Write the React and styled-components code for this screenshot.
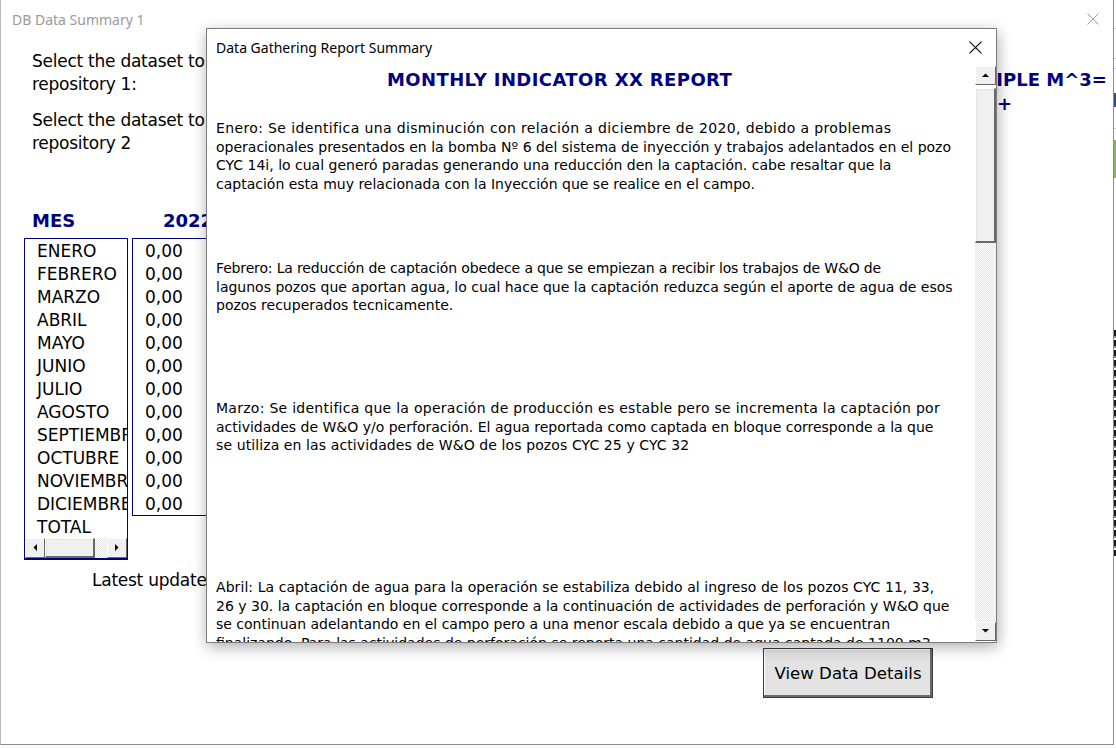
import React from "react";
import styled, { createGlobalStyle } from "styled-components";

const GlobalStyle = createGlobalStyle`
  html, body {
    margin: 0;
    padding: 0;
    width: 1116px;
    height: 748px;
    overflow: hidden;
    background: #ffffff;
  }
  * { box-sizing: border-box; }
`;

const NAVY = "#000080";
const FORM_FONT = `"DejaVu Sans", "Liberation Sans", sans-serif`;
const UI_FONT = `"Noto Sans", "Open Sans", sans-serif`;

const Desktop = styled.div`
  width: 1116px;
  height: 748px;
  display: flex;
  background: #ffffff;
`;

const Window = styled.div`
  position: relative;
  width: 1114px;
  height: 745px;
  flex: none;
  display: flex;
  flex-direction: column;
  background: #ffffff;
  border-left: 1px solid #b9b9b9;
  border-right: 1px solid #8d8d8d;
  border-bottom: 1px solid #8d8d8d;
`;

const EdgeStrip = styled.div`
  flex: 1;
  height: 748px;
  display: flex;
  flex-direction: column;
  background:
    linear-gradient(#ffffff 0 28px, #c8c8c8 28px 29px, #ffffff 29px 58px, #c8c8c8 58px 59px,
      #ffffff 59px 68px, #c8c8c8 68px 69px, #ffffff 69px 93px, #2f4f86 93px 107px,
      #ffffff 107px 128px, #c8c8c8 128px 129px, #ffffff 129px 140px, #8cb369 140px 178px,
      #ffffff 178px);
`;

const EdgeText = styled.div`
  margin-top: 330px;
  height: 226px;
  background: repeating-linear-gradient(#1a1a1a 0 6px, #8a8a8a 6px 8px, #ffffff 8px 10px);
`;

const TitleBar = styled.div`
  height: 38px;
  flex: none;
  display: flex;
  align-items: center;
  justify-content: space-between;
  padding: 0 14px 0 11px;
`;

const WindowTitle = styled.span`
  font-family: ${UI_FONT};
  font-size: 14px;
  color: #9a9a9a;
`;

const CloseGlyph = ({ color, size }) => (
  <svg width={size} height={size} viewBox="0 0 12 12">
    <path d="M0.5 0.5 L11.5 11.5 M11.5 0.5 L0.5 11.5" stroke={color} strokeWidth="1" fill="none" />
  </svg>
);

const Body = styled.div`
  flex: 1;
  display: grid;
  grid-template-columns: 996px 1fr;
`;

const LeftColumn = styled.div`
  display: flex;
  flex-direction: column;
  padding-left: 23px;
`;

const Prompt = styled.div`
  margin: ${(p) => p.$top}px 0 0 8px;
  font-family: ${FORM_FONT};
  font-size: 17px;
  letter-spacing: -0.25px;
  line-height: 22.5px;
  color: #000;
  white-space: nowrap;
`;

const HeaderRow = styled.div`
  display: flex;
  margin: 56px 0 0 8px;
  height: 22px;
`;

const HeaderCell = styled.div`
  width: ${(p) => p.$w}px;
  font-family: ${FORM_FONT};
  font-weight: bold;
  font-size: 18px;
  line-height: 22px;
  color: ${NAVY};
`;

const ListsRow = styled.div`
  display: flex;
  align-items: flex-start;
  gap: 4px;
  margin-top: 6px;
  height: 322px;
`;

const ListBox = styled.div`
  width: ${(p) => p.$w}px;
  height: ${(p) => p.$h}px;
  display: flex;
  flex-direction: column;
  border: 1px solid ${NAVY};
  border-bottom-width: ${(p) => (p.$thick ? 2 : 1)}px;
  overflow: hidden;
  background: #fff;
`;

const ListItems = styled.div`
  flex: 1;
  padding: 1px 0 0 12px;
  overflow: hidden;
`;

const ListItem = styled.div`
  height: 23px;
  font-family: ${FORM_FONT};
  font-size: 17px;
  line-height: 23px;
  color: #000;
  white-space: nowrap;
`;

const HScroll = styled.div`
  height: 20px;
  display: flex;
  flex: none;
`;

const ScrollButton = styled.div`
  width: ${(p) => p.$w || 20}px;
  height: ${(p) => p.$h || 20}px;
  flex: none;
  display: flex;
  align-items: center;
  justify-content: center;
  background: #f0f0f0;
  border-top: 1px solid #ffffff;
  border-left: 1px solid #ffffff;
  border-right: 1px solid #696969;
  border-bottom: 1px solid #696969;
`;

const ScrollThumb = styled.div`
  flex: none;
  width: ${(p) => p.$w || "auto"};
  height: ${(p) => p.$h || "auto"};
  margin: ${(p) => p.$m || 0};
  background: #f0f0f0;
  border-top: 1px solid #ffffff;
  border-left: 1px solid #ffffff;
  border-right: 2px solid #696969;
  border-bottom: 2px solid #696969;
  box-shadow: inset 1px 1px 0 #e3e3e3;
`;

const ScrollTrack = styled.div`
  flex: 1;
  background-color: #ffffff;
  background-image: repeating-conic-gradient(#e4e4e4 0 25%, #ffffff 0 50%);
  background-size: 2px 2px;
`;

const Arrow = ({ dir }) => {
  const pts = {
    up: "0,4 7,4 3.5,0.5",
    down: "0,0 7,0 3.5,3.5",
    left: "4,0 4,7 0.5,3.5",
    right: "0,0 0,7 3.5,3.5",
  }[dir];
  const horiz = dir === "left" || dir === "right";
  return (
    <svg width={horiz ? 5 : 8} height={horiz ? 8 : 5} viewBox={horiz ? "0 0 5 8" : "0 0 8 5"}>
      <polygon points={pts} fill="#000" />
    </svg>
  );
};

const LatestUpdate = styled.div`
  margin: 9px 0 0 68px;
  font-family: ${FORM_FONT};
  font-size: 17px;
  letter-spacing: -0.25px;
  line-height: 22px;
  color: #000;
  white-space: nowrap;
`;

const ButtonRow = styled.div`
  display: flex;
  justify-content: flex-end;
  margin: 57px 64px 0 0;
`;

const ActionButton = styled.button`
  width: 170px;
  height: 50px;
  padding: 0;
  background: #e3e3e3;
  border: 1px solid #3a3a3a;
  box-shadow: inset -2px -2px 0 #6a6a6a, inset 1px 1px 0 #ffffff;
  font-family: ${FORM_FONT};
  font-size: 16.6px;
  color: #000;
  cursor: default;
`;

const RightColumn = styled.div`
  padding-top: 30px;
`;

const SideLabel = styled.div`
  width: 115px;
  text-indent: -54px;
  font-family: ${FORM_FONT};
  font-weight: bold;
  font-size: 18px;
  line-height: 24px;
  color: ${NAVY};
`;

/* ---------- modal dialog ---------- */

const Dialog = styled.div`
  position: absolute;
  left: 205px;
  top: 28px;
  width: 791px;
  height: 615px;
  z-index: 10;
  display: flex;
  flex-direction: column;
  background: #ffffff;
  border: 1px solid #7c7c7c;
  box-shadow: 1px 4px 14px rgba(0, 0, 0, 0.32);
`;

const DialogTitleBar = styled.div`
  height: 33px;
  flex: none;
  display: flex;
  align-items: center;
  justify-content: space-between;
  padding: 3px 14px 0 9px;
`;

const DialogTitle = styled.span`
  font-family: ${UI_FONT};
  font-size: 14px;
  color: #000;
`;

const DialogBody = styled.div`
  flex: 1;
  display: flex;
  overflow: hidden;
`;

const TextPane = styled.div`
  flex: 1;
  overflow: hidden;
  padding: 6px 0 0 9px;
`;

const ReportHeading = styled.div`
  padding-left: 171px;
  font-family: ${FORM_FONT};
  font-weight: bold;
  font-size: 18px;
  letter-spacing: 0.4px;
  line-height: 24px;
  color: ${NAVY};
  white-space: nowrap;
`;

const Paragraph = styled.div`
  margin-top: ${(p) => p.$top}px;
  font-family: ${FORM_FONT};
  font-size: 14px;
  line-height: 18.7px;
  color: #000;
`;

const Line = styled.div`
  white-space: nowrap;
  letter-spacing: ${(p) => p.$ls || 0}px;
`;

const VScroll = styled.div`
  width: 21px;
  flex: none;
  display: flex;
  flex-direction: column;
  margin: 4px 0 1px 0;
`;

const months = [
  "ENERO", "FEBRERO", "MARZO", "ABRIL", "MAYO", "JUNIO", "JULIO",
  "AGOSTO", "SEPTIEMBRE", "OCTUBRE", "NOVIEMBRE", "DICIEMBRE", "TOTAL",
];

const paragraphs = [
  {
    top: 27,
    lines: [
      ["Enero: Se identifica una disminución con relación a diciembre de 2020, debido a problemas", 0.37],
      ["operacionales presentados en la bomba Nº 6 del sistema de inyección y trabajos adelantados en el pozo", 0],
      ["CYC 14i, lo cual generó paradas generando una reducción den la captación. cabe resaltar que la", 0],
      ["captación esta muy relacionada con la Inyección que se realice en el campo.", 0],
    ],
  },
  {
    top: 65,
    lines: [
      ["Febrero: La reducción de captación obedece a que se empiezan a recibir los trabajos de W&O de", -0.15],
      ["lagunos pozos que aportan agua, lo cual hace que la captación reduzca según el aporte de agua de esos", 0],
      ["pozos recuperados tecnicamente.", 0],
    ],
  },
  {
    top: 84,
    lines: [
      ["Marzo: Se identifica que la operación de producción es estable pero se incrementa la captación por", 0.27],
      ["actividades de W&O y/o perforación. El agua reportada como captada en bloque corresponde a la que", 0],
      ["se utiliza en las actividades de W&O de los pozos CYC 25 y CYC 32", 0.1],
    ],
  },
  {
    top: 123,
    lines: [
      ["Abril: La captación de agua para la operación se estabiliza debido al ingreso de los pozos CYC 11, 33,", 0.07],
      ["26 y 30. la captación en bloque corresponde a la continuación de actividades de perforación y W&O que", 0],
      ["se continuan adelantando en el campo pero a una menor escala debido a que ya se encuentran", 0],
      ["finalizando. Para las actividades de perforación se reporta una cantidad de agua captada de 1100 m3", 0],
    ],
  },
];

export default function App() {
  return (
    <>
      <GlobalStyle />
      <Desktop>
        <Window>
          <TitleBar>
            <WindowTitle>DB Data Summary 1</WindowTitle>
            <CloseGlyph color="#9a9a9a" size={12} />
          </TitleBar>
          <Body>
            <LeftColumn>
              <Prompt $top={12}>
                Select the dataset to load into
                <br />
                repository 1:
              </Prompt>
              <Prompt $top={14}>
                Select the dataset to load into
                <br />
                repository 2
              </Prompt>
              <HeaderRow>
                <HeaderCell $w={131}>MES</HeaderCell>
                <HeaderCell $w={80}>2022</HeaderCell>
              </HeaderRow>
              <ListsRow>
                <ListBox $w={104} $h={322} $thick>
                  <ListItems>
                    {months.map((m) => (
                      <ListItem key={m}>{m}</ListItem>
                    ))}
                  </ListItems>
                  <HScroll>
                    <ScrollButton>
                      <Arrow dir="left" />
                    </ScrollButton>
                    <ScrollThumb $w="50px" $h="20px" />
                    <ScrollTrack />
                    <ScrollButton>
                      <Arrow dir="right" />
                    </ScrollButton>
                  </HScroll>
                </ListBox>
                <ListBox $w={90} $h={278}>
                  <ListItems>
                    {months.slice(0, 12).map((m) => (
                      <ListItem key={m}>0,00</ListItem>
                    ))}
                  </ListItems>
                </ListBox>
              </ListsRow>
              <LatestUpdate>Latest update: 0</LatestUpdate>
              <ButtonRow>
                <ActionButton>View Data Details</ActionButton>
              </ButtonRow>
            </LeftColumn>
            <RightColumn>
              <SideLabel>MULTIPLE M^3= +</SideLabel>
            </RightColumn>
          </Body>

          <Dialog>
            <DialogTitleBar>
              <DialogTitle>Data Gathering Report Summary</DialogTitle>
              <CloseGlyph color="#000" size={13} />
            </DialogTitleBar>
            <DialogBody>
              <TextPane>
                <ReportHeading>MONTHLY INDICATOR XX REPORT</ReportHeading>
                {paragraphs.map((p, i) => (
                  <Paragraph key={i} $top={p.top}>
                    {p.lines.map(([text, ls], j) => (
                      <Line key={j} $ls={ls}>{text}</Line>
                    ))}
                  </Paragraph>
                ))}
              </TextPane>
              <VScroll>
                <ScrollButton $w={21} $h={19}>
                  <Arrow dir="up" />
                </ScrollButton>
                <ScrollThumb $h="155px" $m="3px 0 0 0" />
                <ScrollTrack />
                <ScrollButton $w={21} $h={19}>
                  <Arrow dir="down" />
                </ScrollButton>
              </VScroll>
            </DialogBody>
          </Dialog>
        </Window>
        <EdgeStrip>
          <EdgeText />
        </EdgeStrip>
      </Desktop>
    </>
  );
}
